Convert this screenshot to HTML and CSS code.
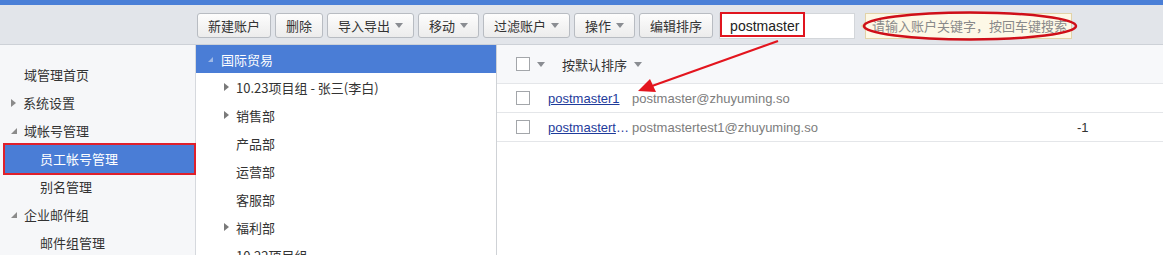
FILE: index.html
```html
<!DOCTYPE html>
<html>
<head>
	<meta charset="UTF-8">
	<title>员工帐号管理</title>
	<link rel="stylesheet" href="styles.css">
</head>
<body>
	<div class="topbar"></div>

	<div class="toolbar">
		<div class="btns">
			<button type="button" class="btn">新建账户</button>
			<button type="button" class="btn">删除</button>
			<button type="button" class="btn">导入导出<i class="caret"></i></button>
			<button type="button" class="btn">移动<i class="caret"></i></button>
			<button type="button" class="btn">过滤账户<i class="caret"></i></button>
			<button type="button" class="btn">操作<i class="caret"></i></button>
			<button type="button" class="btn">编辑排序</button>
		</div>
		<div class="search">
			<input type="text" class="search-input" value="postmaster">
			<div class="search-tip">请输入账户关键字，按回车键搜索</div>
		</div>
	</div>

	<div class="main">
		<ul class="side">
			<li class="side-item">域管理首页</li>
			<li class="side-item"><i class="tri tri-right"></i>系统设置</li>
			<li class="side-item"><i class="tri tri-down"></i>域帐号管理</li>
			<li class="side-item sub active">员工帐号管理</li>
			<li class="side-item sub">别名管理</li>
			<li class="side-item"><i class="tri tri-down"></i>企业邮件组</li>
			<li class="side-item sub">邮件组管理</li>
		</ul>

		<ul class="tree">
			<li class="tree-root"><i class="tri tri-open"></i>国际贸易</li>
			<li class="tree-node"><i class="tri tri-right dark"></i>10.23项目组 - 张三(李白)</li>
			<li class="tree-node"><i class="tri tri-right dark"></i>销售部</li>
			<li class="tree-node">产品部</li>
			<li class="tree-node">运营部</li>
			<li class="tree-node">客服部</li>
			<li class="tree-node"><i class="tri tri-right dark"></i>福利部</li>
			<li class="tree-node">10.22项目组</li>
		</ul>

		<div class="list">
			<div class="list-head">
				<span class="chk"></span><i class="caret"></i>
				<span class="sort">按默认排序<i class="caret"></i></span>
			</div>
			<div class="row">
				<span class="chk"></span>
				<a class="name" href="#">postmaster1</a>
				<span class="mail">postmaster@zhuyuming.so</span>
				<span class="num"></span>
			</div>
			<div class="row">
				<span class="chk"></span>
				<a class="name" href="#">postmastertest1</a>
				<span class="mail">postmastertest1@zhuyuming.so</span>
				<span class="num">-1</span>
			</div>
		</div>
	</div>

	<!-- 标注 -->
	<div class="mark-box"></div>
	<svg class="marks" width="1163" height="255" viewBox="0 0 1163 255">
		<ellipse cx="970" cy="26" rx="106" ry="13.5" fill="none" stroke="#cf0f19" stroke-width="2.5"/>
		<line x1="778" y1="41" x2="652" y2="86" stroke="#e3151e" stroke-width="2.2"/>
		<polygon points="638,91 650,79 656,92" fill="#e3151e"/>
	</svg>
</body>
</html>
```

FILE: styles.css
```css
* {
	margin: 0;
	padding: 0;
}

body {
	font-family: "Liberation Sans", "Noto Sans CJK SC", sans-serif;
	font-size: 13px;
	color: #333;
	background: #fff;
	position: relative;
	overflow: hidden;
	height: 255px;
}

ul {
	list-style: none;
}

.topbar {
	height: 5px;
	background-color: #4a7fd7;
}

.toolbar {
	height: 40px;
	background-color: #e2e5ea;
	border-bottom: 1px solid #cdd1d7;
	display: flex;
	align-items: flex-start;
	padding: 8px 0 0 197px;
	box-sizing: border-box;
}

.btns {
	display: flex;
	gap: 4px;
}

.btn {
	height: 25px;
	padding: 0 10px;
	border: 1px solid #b8bcc2;
	border-radius: 3px;
	background: linear-gradient(#fdfdfd, #ececec);
	font-family: "Noto Sans CJK SC", sans-serif;
	font-size: 13px;
	color: #333;
	display: flex;
	align-items: center;
}

.caret {
	display: inline-block;
	width: 0;
	height: 0;
	border-left: 4px solid transparent;
	border-right: 4px solid transparent;
	border-top: 5px solid #8a8d92;
	margin-left: 5px;
	vertical-align: middle;
}

.search {
	display: flex;
	margin-left: 6px;
	gap: 10px;
}

.search-input {
	width: 136px;
	height: 26px;
	box-sizing: border-box;
	border: 1px solid #d3d6da;
	background: #fff;
	padding: 0 10px;
	font-family: "Liberation Sans", sans-serif;
	font-size: 14px;
	color: #222;
	outline: none;
}

.search-tip {
	width: 207px;
	height: 26px;
	box-sizing: border-box;
	border: 1px solid #e2d3a8;
	background-color: #fdf8e6;
	padding-left: 6px;
	line-height: 24px;
	font-family: "Noto Sans CJK SC", sans-serif;
	font-size: 13px;
	color: #8a8a8a;
	white-space: nowrap;
	position: relative;
}

.search-tip:before {
	content: "";
	position: absolute;
	left: -5px;
	top: 8px;
	border-top: 4px solid transparent;
	border-bottom: 4px solid transparent;
	border-right: 4px solid #e2d3a8;
}

.main {
	display: flex;
	height: 215px;
}

.side {
	width: 196px;
	flex-shrink: 0;
	background-color: #f6f7f9;
	border-right: 1px solid #d6d9de;
	padding-top: 16px;
	box-sizing: border-box;
	font-family: "Noto Sans CJK SC", sans-serif;
	color: #333;
}

.side-item {
	height: 28px;
	line-height: 28px;
	padding-left: 24px;
	display: flex;
	align-items: center;
	white-space: nowrap;
}

.side-item .tri {
	margin-left: -13px;
	margin-right: 7px;
}

.side-item.sub {
	padding-left: 40px;
}

.side-item.active {
	background-color: #4a7dd6;
	color: #fff;
	margin: 0 1px 0 5px;
	padding-left: 35px;
	outline: 2px solid #e0202b;
}

.tri {
	display: inline-block;
	width: 0;
	height: 0;
}

.tri-right {
	border-top: 4px solid transparent;
	border-bottom: 4px solid transparent;
	border-left: 5px solid #8b8b8b;
}

.tri-right.dark {
	border-left-color: #7a7a7a;
}

.tri-down {
	border-left: 6px solid transparent;
	border-bottom: 6px solid #8b8b8b;
}

.tri-open {
	border-left: 5px solid transparent;
	border-bottom: 5px solid #9fb9e6;
}

.tree {
	width: 301px;
	flex-shrink: 0;
	border-right: 1px solid #cfd2d6;
	box-sizing: border-box;
	font-family: "Noto Sans CJK SC", sans-serif;
	color: #333;
}

.tree-root {
	height: 28px;
	background-color: #4a7dd6;
	color: #fff;
	display: flex;
	align-items: center;
	padding-left: 12px;
}

.tree-root .tri {
	margin-right: 8px;
}

.tree-node {
	height: 28px;
	display: flex;
	align-items: center;
	padding-left: 40px;
	white-space: nowrap;
}

.tree-node .tri {
	margin-left: -12px;
	margin-right: 7px;
}

.list {
	flex: 1;
}

.list-head {
	height: 38px;
	background-color: #f7f8fa;
	border-bottom: 1px solid #e4e6e9;
	display: flex;
	align-items: center;
	padding-left: 19px;
	font-family: "Noto Sans CJK SC", sans-serif;
}

.list-head .caret {
	margin-left: 7px;
}

.sort {
	margin-left: 17px;
	display: flex;
	align-items: center;
}

.sort .caret {
	margin-left: 7px;
}

.chk {
	display: inline-block;
	width: 12px;
	height: 12px;
	border: 1px solid #a3a6aa;
	background: #fff;
}

.row {
	height: 28px;
	border-bottom: 1px solid #e4e6e9;
	display: flex;
	align-items: center;
	padding-left: 19px;
}

.name {
	width: 81px;
	margin-left: 18px;
	margin-right: 3px;
	color: #1e3b9b;
	overflow: hidden;
	text-overflow: ellipsis;
	white-space: nowrap;
}

.mail {
	width: 445px;
	color: #7d7d7d;
	white-space: nowrap;
}

.num {
	color: #333;
}

.mark-box {
	position: absolute;
	left: 720px;
	top: 12px;
	width: 81px;
	height: 21px;
	border: 2px solid #e0151f;
}

.marks {
	position: absolute;
	left: 0;
	top: 0;
	pointer-events: none;
}
```
